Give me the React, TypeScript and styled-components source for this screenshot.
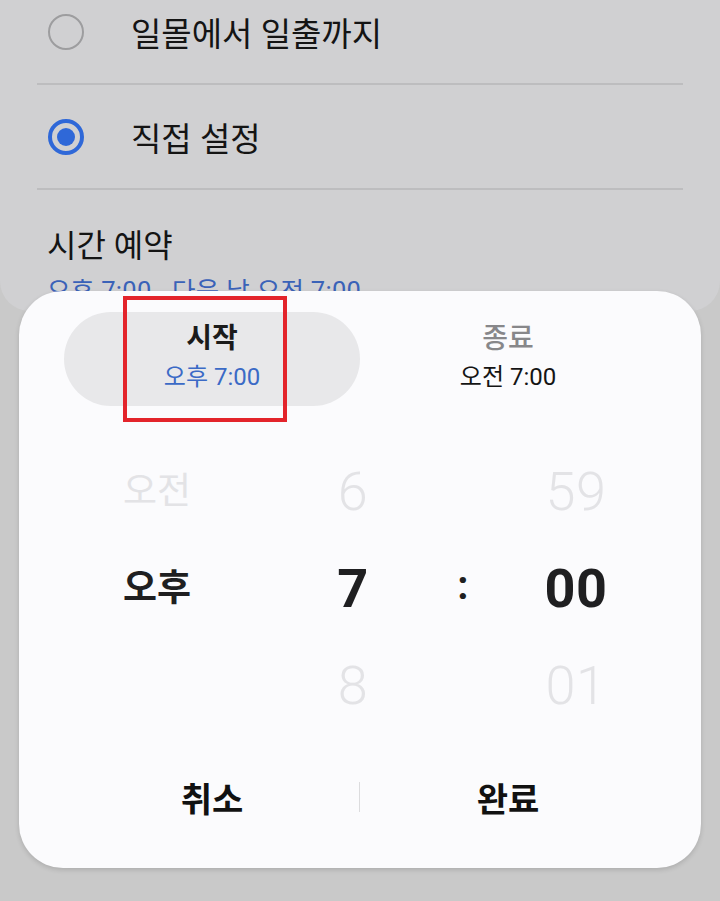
import React from "react";
import styled, { createGlobalStyle } from "styled-components";

const Global = createGlobalStyle`
  html, body { margin: 0; padding: 0; }
  body {
    background: #c9c9c9;
    font-family: Roboto, "Noto Sans CJK KR", sans-serif;
    width: 720px;
    height: 901px;
    overflow: hidden;
  }
`;

const Screen = styled.div`
  position: relative;
  width: 720px;
  height: 901px;
  background: #c9c9c9;
  overflow: hidden;
`;

const SettingsCard = styled.div`
  margin-top: -20px;
  background: #d0d0d2;
  border-radius: 0 0 30px 30px;
  height: 331px;
  display: flex;
  flex-direction: column;
  overflow: hidden;
`;

const OptionRow = styled.div`
  height: 105px;
  margin: 0 37px;
  display: flex;
  align-items: center;
  border-bottom: 2px solid #bdbdbf;
  box-sizing: border-box;
`;

const Radio = styled.span<{ $checked?: boolean }>`
  width: 36px;
  height: 36px;
  margin-left: 11px;
  box-sizing: border-box;
  border-radius: 50%;
  border: ${(p) => (p.$checked ? "4px solid #2f68d8" : "2.5px solid #9d9d9f")};
  display: flex;
  align-items: center;
  justify-content: center;
  flex-shrink: 0;
  &::after {
    content: "";
    display: ${(p) => (p.$checked ? "block" : "none")};
    width: 18px;
    height: 18px;
    border-radius: 50%;
    background: #2f68d8;
  }
`;

const OptionLabel = styled.span`
  margin-left: 47px;
  font-size: 33px;
  color: #141414;
`;

const Section = styled.div`
  padding: 36px 47px 0;
  display: flex;
  flex-direction: column;
`;

const SectionTitle = styled.div`
  font-size: 32px;
  color: #141414;
  line-height: 40px;
`;

const SectionValue = styled.div`
  margin-top: 10px;
  font-size: 25.5px;
  color: #3a62b8;
  line-height: 30px;
  letter-spacing: 0.3px;
`;

const Dialog = styled.div`
  position: absolute;
  left: 19px;
  top: 291px;
  width: 682px;
  height: 577px;
  box-sizing: border-box;
  background: #fbfbfd;
  border-radius: 44px;
  box-shadow: 0 2px 5px rgba(0, 0, 0, 0.14);
  padding-top: 21px;
  display: flex;
  flex-direction: column;
`;

const Tabs = styled.div`
  display: grid;
  grid-template-columns: 296px 296px;
  padding: 0 45px;
`;

const Tab = styled.div<{ $active?: boolean }>`
  height: 94px;
  border-radius: 47px;
  background: ${(p) => (p.$active ? "#e8e8ea" : "transparent")};
  display: flex;
  flex-direction: column;
  align-items: center;
  padding-top: 9px;
  box-sizing: border-box;
`;

const TabTitle = styled.div<{ $active?: boolean }>`
  font-size: 28px;
  line-height: 36px;
  font-weight: ${(p) => (p.$active ? 700 : 500)};
  color: ${(p) => (p.$active ? "#1b1b1b" : "#87878a")};
`;

const TabValue = styled.div<{ $active?: boolean }>`
  margin-top: 5px;
  font-size: 24px;
  line-height: 30px;
  color: ${(p) => (p.$active ? "#3b6ac6" : "#141414")};
`;

const Picker = styled.div`
  margin-top: 37px;
  display: grid;
  grid-template-columns: 276px 116px 104px 122px;
  grid-template-rows: repeat(3, 97px);
  align-items: center;
  justify-items: center;
`;

const Cell = styled.div<{ $selected?: boolean; $kind: "ampm" | "num" }>`
  font-size: ${(p) => (p.$kind === "ampm" ? "37px" : "54px")};
  font-weight: ${(p) => (p.$selected ? 700 : p.$kind === "ampm" ? 400 : 300)};
  color: ${(p) => (p.$selected ? "#1f1f21" : "#e3e3e6")};
  line-height: 1;
  letter-spacing: ${(p) => (p.$kind === "num" ? "0.5px" : "0")};
`;

const Colon = styled.div`
  font-size: 40px;
  font-weight: 700;
  color: #1f1f21;
  line-height: 1;
  margin-top: -6px;
`;

const Buttons = styled.div`
  margin-top: 23px;
  height: 80px;
  padding: 0 45px;
  display: grid;
  grid-template-columns: 296px 296px;
  align-items: center;
  position: relative;
`;

const ActionButton = styled.button`
  all: unset;
  text-align: center;
  font-family: Roboto, "Noto Sans CJK KR", sans-serif;
  font-size: 34px;
  font-weight: 700;
  color: #111;
`;

const ButtonDivider = styled.span`
  position: absolute;
  left: 340px;
  top: 25px;
  width: 1px;
  height: 30px;
  background: #dcdcde;
`;

const Highlight = styled.div`
  position: absolute;
  left: 104px;
  top: 5px;
  width: 164px;
  height: 126px;
  box-sizing: border-box;
  border: 4px solid #e3242b;
  pointer-events: none;
`;

export default function App() {
  return (
    <>
      <Global />
      <Screen>
        <SettingsCard>
          <OptionRow>
            <Radio />
            <OptionLabel>일몰에서 일출까지</OptionLabel>
          </OptionRow>
          <OptionRow>
            <Radio $checked />
            <OptionLabel>직접 설정</OptionLabel>
          </OptionRow>
          <Section>
            <SectionTitle>시간 예약</SectionTitle>
            <SectionValue>오후 7:00 - 다음 날 오전 7:00</SectionValue>
          </Section>
        </SettingsCard>

        <Dialog>
          <Tabs>
            <Tab $active>
              <TabTitle $active>시작</TabTitle>
              <TabValue $active>오후 7:00</TabValue>
            </Tab>
            <Tab>
              <TabTitle>종료</TabTitle>
              <TabValue>오전 7:00</TabValue>
            </Tab>
          </Tabs>

          <Picker>
            <Cell $kind="ampm">오전</Cell>
            <Cell $kind="num">6</Cell>
            <span />
            <Cell $kind="num">59</Cell>

            <Cell $kind="ampm" $selected>오후</Cell>
            <Cell $kind="num" $selected>7</Cell>
            <Colon>:</Colon>
            <Cell $kind="num" $selected>00</Cell>

            <span />
            <Cell $kind="num">8</Cell>
            <span />
            <Cell $kind="num">01</Cell>
          </Picker>

          <Buttons>
            <ActionButton>취소</ActionButton>
            <ButtonDivider />
            <ActionButton>완료</ActionButton>
          </Buttons>

          <Highlight />
        </Dialog>
      </Screen>
    </>
  );
}
